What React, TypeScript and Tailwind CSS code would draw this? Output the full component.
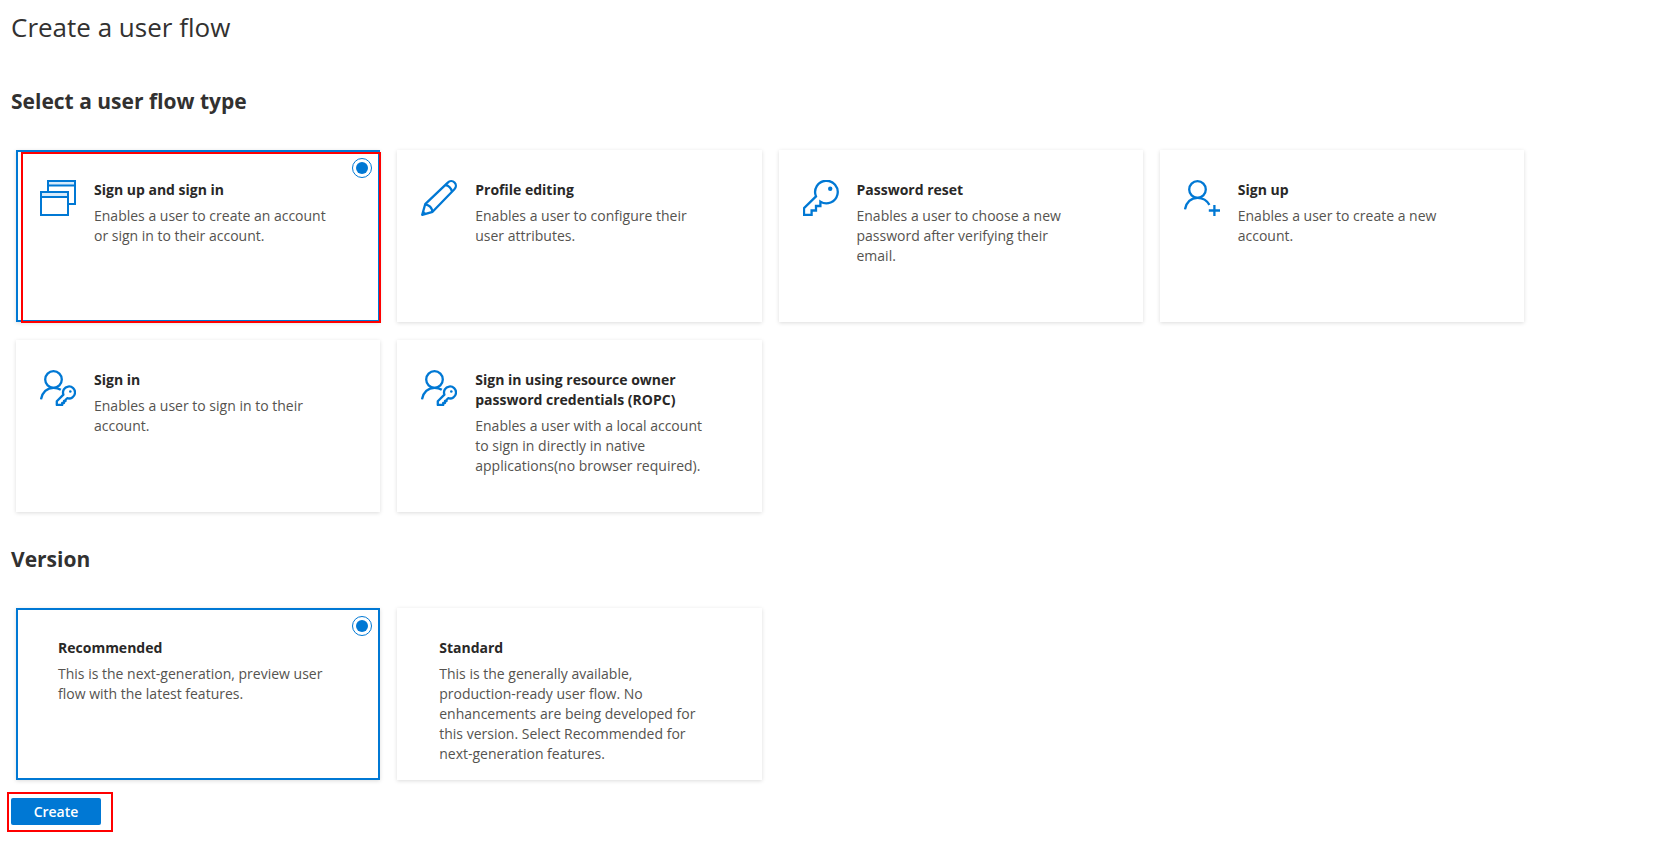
import { useState, type ReactNode } from "react";

const iconProps = {
  viewBox: "0 0 36 36",
  fill: "none",
  stroke: "#0078d4",
  strokeWidth: 2.3,
  className: "size-9 shrink-0",
  "aria-hidden": true,
} as const;

function WindowsIcon() {
  return (
    <svg {...iconProps} strokeWidth={2}>
      <path d="M8 5.5H35V1H8ZM1 17H28V12H1Z" fill="#d6eafa" stroke="none" />
      <path d="M8 11.5V1H35V24H29" />
      <path d="M8 5.5H35" />
      <path d="M1 12H28V35H1Z" />
      <path d="M1 17H28" />
    </svg>
  );
}

function PencilIcon() {
  return (
    <svg {...iconProps} strokeLinejoin="round">
      <path d="M1.2 34.8L4.2 24.2L26.8 2.6C28.6 0.8 31.6 0.6 33.5 2.5C35.4 4.4 35.2 7.4 33.4 9.2L11.6 31.8Z" />
      <path d="M24.3 5C27.2 5.4 30.2 8.2 31 11.6" />
      <path d="M4.2 24.4C7.8 25 10.8 27.8 11.6 31.6" />
      <path d="M1.2 34.8L2.3 31L5 33.7Z" fill="#0078d4" strokeWidth={1} />
    </svg>
  );
}

function KeyIcon() {
  return (
    <svg {...iconProps}>
      <path d="M13 16.4A11.3 11.3 0 1 1 17.4 21.6V26H13V30.5H8.6V35H1V28.2Z" />
      <circle cx="27.2" cy="8.8" r="2.2" fill="#0078d4" stroke="none" />
    </svg>
  );
}

function UserPlusIcon() {
  return (
    <svg {...iconProps}>
      <circle cx="13.5" cy="9.5" r="8.3" />
      <path d="M1 29.3C2.2 22.4 7 17.8 13.5 17.8C18.6 17.8 23 20.4 25.4 24.9" />
      <path d="M30.4 25V36M24.8 30.5H36" />
    </svg>
  );
}

function UserKeyIcon() {
  return (
    <svg {...iconProps}>
      <circle cx="13.5" cy="9.5" r="8.3" />
      <path d="M1 29.3C2.2 22.4 7 17.8 13.5 17.8C16.2 17.8 18.6 18.4 20.8 19.8" />
      <path
        d="M23.4 24.6A6 6 0 1 1 27.2 28.2L25.6 29.8V31H24V33H22.2V35H16.8V31.2Z"
        strokeLinejoin="round"
      />
      <circle cx="30.3" cy="21.5" r="1.3" fill="#0078d4" stroke="none" />
    </svg>
  );
}

type Option = { id: string; title: string; text: string; icon?: ReactNode };

const flowTypes: Option[] = [
  {
    id: "signup-signin",
    title: "Sign up and sign in",
    text: "Enables a user to create an account or sign in to their account.",
    icon: <WindowsIcon />,
  },
  {
    id: "profile",
    title: "Profile editing",
    text: "Enables a user to configure their user attributes.",
    icon: <PencilIcon />,
  },
  {
    id: "reset",
    title: "Password reset",
    text: "Enables a user to choose a new password after verifying their email.",
    icon: <KeyIcon />,
  },
  {
    id: "signup",
    title: "Sign up",
    text: "Enables a user to create a new account.",
    icon: <UserPlusIcon />,
  },
  {
    id: "signin",
    title: "Sign in",
    text: "Enables a user to sign in to their account.",
    icon: <UserKeyIcon />,
  },
  {
    id: "ropc",
    title: "Sign in using resource owner password credentials (ROPC)",
    text: "Enables a user with a local account to sign in directly in native applications(no browser required).",
    icon: <UserKeyIcon />,
  },
];

const versions: Option[] = [
  {
    id: "recommended",
    title: "Recommended",
    text: "This is the next-generation, preview user flow with the latest features.",
  },
  {
    id: "standard",
    title: "Standard",
    text: "This is the generally available, production-ready user flow. No enhancements are being developed for this version. Select Recommended for next-generation features.",
  },
];

function OptionCard({
  option,
  group,
  checked,
  marked,
  onSelect,
}: {
  option: Option;
  group: string;
  checked: boolean;
  marked?: boolean;
  onSelect: () => void;
}) {
  return (
    <label
      className={`relative flex min-h-[172px] gap-[18px] border-2 bg-white pb-3 pt-7 shadow-[0_1px_4px_rgba(0,0,0,0.14)] ${
        option.icon ? "pl-[22px]" : "pl-10"
      } ${checked ? "border-[#0078d4]" : "border-transparent"}`}
    >
      {option.icon}
      <span className={`flex flex-col gap-1.5 ${option.icon ? "w-[234px]" : "w-[268px]"}`}>
        <span className="font-bold text-[#292827]">{option.title}</span>
        <span className="text-[#55534f]">{option.text}</span>
      </span>
      <input
        type="radio"
        name={group}
        checked={checked}
        onChange={onSelect}
        className="absolute right-[6px] top-[6px] grid size-5 appearance-none place-items-center rounded-full checked:border checked:border-[#0078d4] checked:before:size-3 checked:before:rounded-full checked:before:bg-[#0078d4] checked:before:content-['']"
      />
      {marked && (
        <span className="pointer-events-none absolute -bottom-[3px] -right-[3px] left-[3px] top-0 border-2 border-[#ff0000]" />
      )}
    </label>
  );
}

export default function App() {
  const [flow, setFlow] = useState("signup-signin");
  const [version, setVersion] = useState("recommended");
  const grid = "grid max-w-[1508px] gap-x-[17px] gap-y-[18px] sm:grid-cols-2 xl:grid-cols-4";

  return (
    <main className="px-[11px] pt-[7px] font-['Open_Sans','Noto_Sans',sans-serif] text-sm leading-5 text-[#323130]">
      <h1 className="text-[26px] leading-10">Create a user flow</h1>
      <h2 className="mt-[38px] text-[21px] font-bold leading-8">Select a user flow type</h2>
      <div className={`${grid} ml-[5px] mt-[33px]`} role="radiogroup" aria-label="User flow type">
        {flowTypes.map((o) => (
          <OptionCard
            key={o.id}
            option={o}
            group="flow"
            checked={flow === o.id}
            marked={o.id === "signup-signin"}
            onSelect={() => setFlow(o.id)}
          />
        ))}
      </div>
      <h2 className="mt-[31px] text-[21px] font-bold leading-8">Version</h2>
      <div className={`${grid} ml-[5px] mt-[33px]`} role="radiogroup" aria-label="Version">
        {versions.map((o) => (
          <OptionCard
            key={o.id}
            option={o}
            group="version"
            checked={version === o.id}
            onSelect={() => setVersion(o.id)}
          />
        ))}
      </div>
      <div className="-ml-1 mt-3 w-fit border-2 border-[#ff0000] pb-[5px] pl-0.5 pr-2.5 pt-1">
        <button
          type="button"
          className="block h-[27px] w-[90px] rounded-xs bg-[#0078d4] font-semibold leading-6 text-white"
        >
          Create
        </button>
      </div>
    </main>
  );
}
